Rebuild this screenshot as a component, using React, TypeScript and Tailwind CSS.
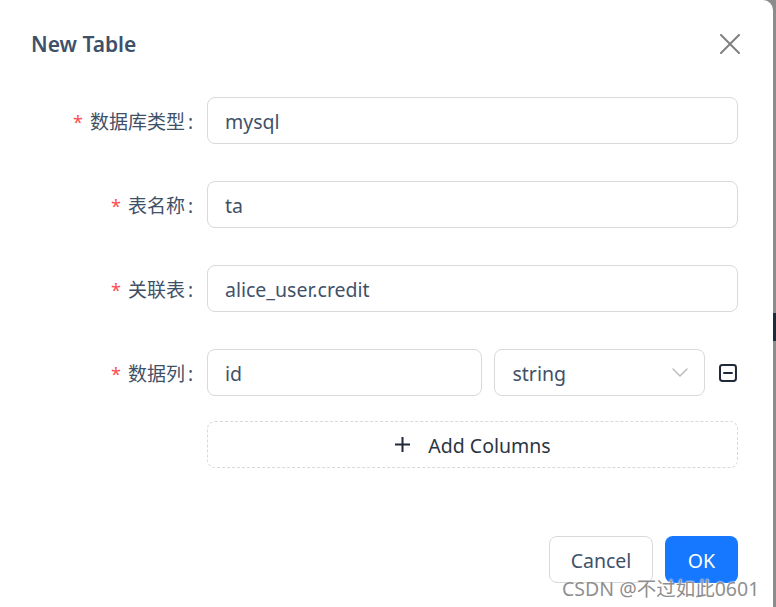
import React from 'react';

const font = { fontFamily: '"Noto Sans", "Noto Sans CJK SC", sans-serif' };

const Label: React.FC<{ text: string }> = ({ text }) => (
  <div className="w-[193px] shrink-0 flex items-center justify-end text-[19px] text-[#3f5168] pt-[3px]">
    <span className="text-[#ff4d4f] mr-[7px] text-[18px]">*</span>
    <span>{text}</span>
    <span className="ml-[3px]">:</span>
  </div>
);

const Field: React.FC<{ value: string; className?: string }> = ({ value, className = '' }) => (
  <div className={`h-[47px] border border-[#d9d9d9] rounded-[8px] flex items-center px-[17px] pt-[3px] text-[19.5px] text-[#3f5168] ${className}`}>
    {value}
  </div>
);

export default function App() {
  return (
    <div className="w-[776px] h-[607px] bg-[#8c8c8c] overflow-hidden relative" style={font}>
      <div className="absolute right-0 top-[313px] w-[3px] h-[28px] bg-[#1e2b3c]" />
      <div className="w-[773px] h-full bg-white rounded-tr-[10px] relative">
        {/* header */}
        <div className="flex items-center justify-between pl-[31px] pr-[33px] pt-[28px] h-[60px]">
          <h1 className="text-[21px] font-semibold text-[#3f5168] pt-[2px]">New Table</h1>
          <svg width="20" height="20" viewBox="0 0 20 20" className="text-[#808080]">
            <path d="M1 1L19 19M19 1L1 19" stroke="currentColor" strokeWidth="2" strokeLinecap="round" />
          </svg>
        </div>

        {/* form */}
        <div className="mt-[37px] pr-[35px] flex flex-col">
          <div className="flex items-center">
            <Label text="数据库类型" />
            <Field value="mysql" className="ml-[14px] flex-1" />
          </div>
          <div className="flex items-center mt-[37px]">
            <Label text="表名称" />
            <Field value="ta" className="ml-[14px] flex-1" />
          </div>
          <div className="flex items-center mt-[37px]">
            <Label text="关联表" />
            <Field value="alice_user.credit" className="ml-[14px] flex-1" />
          </div>
          <div className="flex items-center mt-[37px]">
            <Label text="数据列" />
            <Field value="id" className="ml-[14px] w-[276px]" />
            <div className="ml-[12px] w-[211px] h-[47px] border border-[#d9d9d9] rounded-[8px] flex items-center justify-between pl-[17px] pr-[15px] text-[19.5px] text-[#3f5168]">
              <span className="pt-[3px]">string</span>
              <svg width="18" height="12" viewBox="0 0 18 12">
                <path d="M2 2L9 9L16 2" fill="none" stroke="#bfbfbf" strokeWidth="1.6" strokeLinecap="round" strokeLinejoin="round" />
              </svg>
            </div>
            <svg width="20" height="20" viewBox="0 0 20 20" className="ml-[13px]">
              <rect x="2" y="2" width="16" height="16" rx="2.5" fill="none" stroke="#1f2937" strokeWidth="2" />
              <path d="M6 10H14" stroke="#1f2937" strokeWidth="2" strokeLinecap="round" />
            </svg>
          </div>
          <div className="flex mt-[25px]">
            <div className="w-[207px] shrink-0" />
            <div className="flex-1 h-[47px] border border-dashed border-[#d9d9d9] rounded-[8px] flex items-center justify-center text-[19.5px] text-[#2a3544]">
              <svg width="17" height="17" viewBox="0 0 17 17" className="mr-[17px]">
                <path d="M8.5 1V16M1 8.5H16" stroke="#1f2937" strokeWidth="2" />
              </svg>
              <span className="pt-[3px]">Add Columns</span>
            </div>
          </div>
        </div>

        {/* footer */}
        <div className="flex justify-end gap-[12px] pr-[35px] mt-[68px]">
          <button className="w-[104px] h-[47px] border border-[#d9d9d9] rounded-[8px] text-[19.5px] text-[#3f5168] bg-white pt-[3px]">Cancel</button>
          <button className="w-[73px] h-[47px] rounded-[8px] text-[19.5px] text-white bg-[#1677ff] pt-[3px]">OK</button>
        </div>

        <div
          className="absolute left-[562px] top-[574px] text-[19.5px] text-[#8f8f8f] whitespace-nowrap"
          style={{ textShadow: '0 0 2px #fff, 0 0 2px #fff' }}
        >
          CSDN @不过如此0601
        </div>
      </div>
    </div>
  );
}
